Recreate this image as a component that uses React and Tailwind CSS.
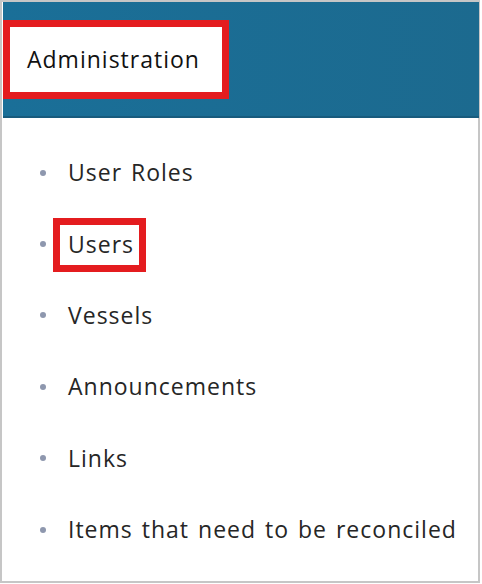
import React from "react";

const items = [
  "User Roles",
  "Users",
  "Vessels",
  "Announcements",
  "Links",
  "Items that need to be reconciled",
];

export default function App() {
  return (
    <div
      className="w-[482px] h-[584px] bg-white"
      style={{ fontFamily: '"Open Sans", "Liberation Sans", sans-serif' }}
    >
      <div className="w-[480px] h-[583px] border-2 border-[#c6c6c6] pl-px">
        <div className="h-[116px] flex items-center bg-gradient-to-r from-[#1a6f98] to-[#1c6a8f] border-b-2 border-[#185b7d] -mr-px">
          <div className="w-[226px] h-[79px] border-[7px] border-[#e41c1f] bg-white flex items-center pl-[17px]">
            <span className="text-[23px] tracking-[1px] text-[#111] leading-none">Administration</span>
          </div>
        </div>
        <ul className="pt-[19px]">
          {items.map((t) => (
            <li key={t} className="h-[71.4px] flex items-center">
              <span className="ml-[37px] w-[6px] h-[6px] rounded-full bg-[#8e97ae]" />
              <span className="relative ml-[22px] text-[23px] tracking-[1px] [word-spacing:2px] text-[#262626] leading-none">
                {t}
                {t === "Users" && (
                  <span className="absolute left-[-15px] top-[-15px] w-[93px] h-[54px] border-[7px] border-[#e41c1f]" />
                )}
              </span>
            </li>
          ))}
        </ul>
      </div>
    </div>
  );
}
